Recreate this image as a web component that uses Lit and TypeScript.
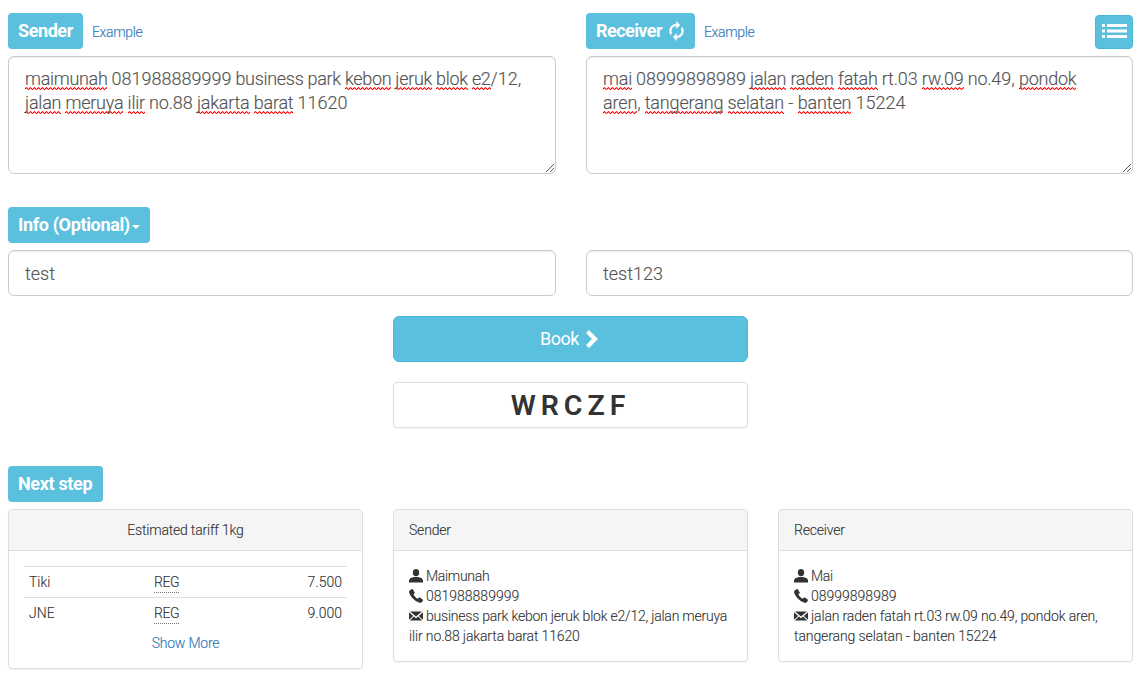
import { LitElement, html, css, svg } from "lit";
import { customElement } from "lit/decorators.js";

const icon = (cls: string, box: string, body: unknown) =>
  html`<svg class="icon ${cls}" viewBox=${box} aria-hidden="true">${body}</svg>`;

const refresh = () => icon("i-refresh", "3.500 .5 17 23", svg`<path d="M12 6v3l4-4-4-4v3c-4.420 0-8 3.580-8 8 0 1.570.46 3.030 1.240 4.260L6.700 14.800A5.870 5.870 0 0 1 6 12c0-3.310 2.690-6 6-6zm6.760 1.740L17.300 9.200c.44.840.7 1.790.7 2.800 0 3.310-2.690 6-6 6v-3l-4 4 4 4v-3c4.420 0 8-3.580 8-8 0-1.570-.46-3.030-1.240-4.260z"/>`);
const list = () => icon("i-list", "0 0 25 14", svg`<path d="M0 0h3v3H0zM5 0h20v3H5zM0 5.500h3v3H0zM5 5.500h20v3H5zM0 11h3v3H0zM5 11h20v3H5z"/>`);
const chevron = () => icon("i-chev", "0 0 12 18", svg`<path d="M3 0 12 9 3 18 0 15 6 9 0 3z"/>`);
const user = () => icon("i-row", "0 0 14 14", svg`<ellipse cx="7" cy="3.600" rx="3.200" ry="3.600"/><path d="M0 13.500v-2C0 9.500 3 8.300 5 8h4c2 .3 5 1.500 5 3.500v2z"/>`);
const phone = () => icon("i-row", "0 0 14 14", svg`<path d="M1 1.200 2.600.2c.5-.3 1-.2 1.300.2l1.700 2.800c.3.5.1 1-.2 1.300l-1 .8c.5 1.700 2.500 3.700 4.300 4.400l1-1c.4-.4.9-.4 1.300-.1l2.600 1.900c.5.400.5.900.2 1.300l-1.100 1.400c-.6.700-1.700.7-2.700.3C5.500 12 1.500 8 .2 3.800-.1 2.700.1 1.800 1 1.200z"/>`);
const mail = () => icon("i-row", "0 0 14 14", svg`<path d="M1 2.500h12L7 7.500zM0 3.300l4.200 3.600L0 10.700zM14 3.300v7.400L9.800 6.900zM4.900 7.500 7 9.300l2.100-1.800 4.100 3.900c-.1.100-.3.100-.5.100H1.300c-.2 0-.4 0-.5-.1z"/>`);

const w = (t: string) => html`<span class="typo">${t}</span>`;
const n = (t: string) => html`<span class="num">${t}</span>`;

@customElement("app-root")
export class AppRoot extends LitElement {
  static styles = css`
    :host { display: block; box-sizing: border-box; height: 677px; padding: 13px 10px 0 8px; background: #fff; color: #333;
      font: 300 14px/20px Roboto, "Liberation Sans", sans-serif; overflow: hidden; }
    * { box-sizing: border-box; }
    .icon { fill: currentColor; flex: none; }
    .two { display: grid; grid-template-columns: 548px 547px; column-gap: 30px; }
    .three { display: grid; grid-template-columns: repeat(3, 355px); column-gap: 30px; align-items: start; }
    .head { display: flex; align-items: center; height: 36px; margin-bottom: 7px; }
    .tag { display: inline-flex; align-items: center; height: 36px; padding: 0 10px; border-radius: 4px; background: #5bc0de; color: #fff;
      font-size: 18px; font-weight: 700; letter-spacing: -.35px; white-space: nowrap; }
    .t-sender { width: 75px; letter-spacing: -.42px; } .t-receiver { width: 109px; letter-spacing: -.55px; } .t-info { width: 142px; } .t-next { width: 95px; }
    a { color: #337ab7; letter-spacing: -.22px; -webkit-text-stroke: .15px currentColor; }
    .head a { margin: 2px 0 0 9px; letter-spacing: -.35px; }
    .i-refresh { width: 15px; height: 20px; margin-left: 7px; stroke: currentColor; stroke-width: .5; }
    .caret { width: 8px; height: 4px; margin: 4px 0 0 2px; }
    .listbtn { display: flex; align-items: center; justify-content: center; width: 38px; height: 34px; margin: 2px 0 0 auto;
      border: 1px solid #46b8da; border-radius: 4px; background: #5bc0de; color: #fff; }
    .i-list { width: 25px; height: 14px; margin-bottom: 2px; }
    .field { border: 1px solid #ccc; border-radius: 6px; background: #fff; box-shadow: inset 0 1px 1px rgba(0,0,0,.075);
      color: #555; font-size: 18px; line-height: 24px; padding: 10px 16px; white-space: nowrap; -webkit-text-stroke: .15px currentColor; }
    .area { display: flex; flex-direction: column; position: relative; height: 118px; }
    .l1 { letter-spacing: -.31px; } .l2 { letter-spacing: -.22px; } .l3 { letter-spacing: -.24px; } .l4 { letter-spacing: -.15px; }
    .num { letter-spacing: 0; }
    .grip { position: absolute; right: 1px; bottom: 1px; width: 8px; height: 8px; stroke: #555; stroke-width: 1; fill: none; }
    .typo { background: url("data:image/svg+xml,%3Csvg xmlns='http://www.w3.org/2000/svg' width='4' height='3'%3E%3Cpath d='M-1 3 1.500 .7 4 3' fill='none' stroke='%23f00' stroke-width='1.100'/%3E%3C/svg%3E") repeat-x left bottom; padding-bottom: 1px; }
    .gap { margin-top: 33px; }
    .input { height: 46px; padding-top: 11px; letter-spacing: 0; }
    .center { width: 355px; margin-left: 385px; }
    .book { display: flex; align-items: center; justify-content: center; height: 46px; margin-top: 20px; border: 1px solid #46b8da;
      border-radius: 6px; background: #5bc0de; color: #fff; font-size: 18px; font-weight: 400; letter-spacing: -.5px; padding-right: 3px; }
    .i-chev { width: 12px; height: 18px; margin: -1px 0 0 7px; }
    .code { display: flex; align-items: center; justify-content: center; height: 46px; margin-top: 20px; padding-top: 2px; border: 1px solid #ddd; border-radius: 4px;
      box-shadow: 0 1px 1px rgba(0,0,0,.05); font-size: 28.500px; font-weight: 600; letter-spacing: 5px; }
    .next { margin-top: 38px; }
    .panel { border: 1px solid #ddd; border-radius: 4px; box-shadow: 0 1px 1px rgba(0,0,0,.05); -webkit-text-stroke: .12px currentColor; }
    .ph { height: 41px; padding: 10px 15px; border-bottom: 1px solid #ddd; background: #f5f5f5; border-radius: 3px 3px 0 0; letter-spacing: -.2px; }
    .mid { text-align: center; }
    .pb { padding: 15px; white-space: nowrap; }
    .tall { height: 160px; } .short { height: 153px; }
    .tr { display: grid; grid-template-columns: 125px 1fr auto; height: 31px; padding: 5px; border-top: 1px solid #ddd; }
    .abbr { justify-self: start; height: 21px; border-bottom: 1px dotted #777; letter-spacing: -.4px; }
    .more { text-align: center; padding-top: 5px; }
    .line { display: flex; align-items: center; height: 20px; }
    .i-row { width: 14px; height: 14px; margin-right: 3px; }
    .p0 { letter-spacing: -.3px; }
    .p2 { letter-spacing: -.22px; }
    .p3 { letter-spacing: -.14px; }
    .p5 { letter-spacing: -.15px; }
    .p6 { letter-spacing: -.1px; }
  `;

  private grip() {
    return html`<svg class="grip" viewBox="0 0 8 8"><path d="M0 8 8 0M4 8 8 4"/></svg>`;
  }

  render() {
    return html`
      <div class="two">
        <section>
          <div class="head"><span class="tag t-sender">Sender</span><a>Example</a></div>
          <div class="field area">
            <div class="l1">${w("maimunah")} ${n("081988889999")} business park ${w("kebon")} ${w("jeruk")} ${w("blok")} ${w("e2")}${n("/12,")}</div>
            <div class="l2">${w("jalan")} ${w("meruya")} ${w("ilir")} no.${n("88")} ${w("jakarta")} ${w("barat")} ${n("11620")}</div>
            ${this.grip()}
          </div>
        </section>
        <section>
          <div class="head"><span class="tag t-receiver">Receiver${refresh()}</span><a>Example</a><span class="listbtn">${list()}</span></div>
          <div class="field area">
            <div class="l3">${w("mai")} ${n("08999898989")} ${w("jalan")} ${w("raden")} ${w("fatah")} rt.${n("03")} ${w("rw.09")} no.${n("49,")} ${w("pondok")}</div>
            <div class="l4">${w("aren")}, ${w("tangerang")} ${w("selatan")} ${n("- ")}${w("banten")} ${n("15224")}</div>
            ${this.grip()}
          </div>
        </section>
      </div>
      <div class="head gap"><span class="tag t-info">Info (Optional)${icon("caret", "0 0 8 4", svg`<path d="M0 0h8L4 4z"/>`)}</span></div>
      <div class="two"><div class="field input">test</div><div class="field input">test123</div></div>
      <div class="center">
        <div class="book"><span>Book</span>${chevron()}</div>
        <div class="code">WRCZF</div>
      </div>
      <div class="head next"><span class="tag t-next">Next step</span></div>
      <div class="three">
        <div class="panel tall">
          <div class="ph mid">Estimated tariff 1kg</div>
          <div class="pb">
            <div class="tr"><span>Tiki</span><span class="abbr">REG</span><span>7.500</span></div>
            <div class="tr"><span>JNE</span><span class="abbr">REG</span><span>9.000</span></div>
            <div class="more"><a>Show More</a></div>
          </div>
        </div>
        <div class="panel short">
          <div class="ph">Sender</div>
          <div class="pb">
            <div class="line">${user()}<span class="p0">Maimunah</span></div>
            <div class="line">${phone()}<span>081988889999</span></div>
            <div class="line">${mail()}<span class="p2">business park kebon jeruk blok e2/12, jalan meruya</span></div>
            <div class="line"><span class="p3">ilir no.88 jakarta barat 11620</span></div>
          </div>
        </div>
        <div class="panel short">
          <div class="ph">Receiver</div>
          <div class="pb">
            <div class="line">${user()}<span class="p0">Mai</span></div>
            <div class="line">${phone()}<span>08999898989</span></div>
            <div class="line">${mail()}<span class="p5">jalan raden fatah rt.03 rw.09 no.49, pondok aren,</span></div>
            <div class="line"><span class="p6">tangerang selatan - banten 15224</span></div>
          </div>
        </div>
      </div>`;
  }
}
